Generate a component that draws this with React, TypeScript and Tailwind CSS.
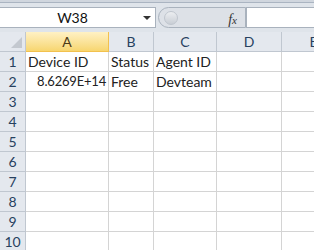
import React from 'react';

const cols = [
  { key: 'A', w: 'w-[83px]' },
  { key: 'B', w: 'w-[45px]' },
  { key: 'C', w: 'w-[63px]' },
  { key: 'D', w: 'w-[65px]' },
  { key: 'E', w: 'w-[64px]' },
];

const data: Record<number, string[]> = {
  1: ['Device ID', 'Status', 'Agent ID', '', ''],
  2: ['8.6269E+14', 'Free', 'Devteam', '', ''],
};

export default function App() {
  const rows = [1, 2, 3, 4, 5, 6, 7, 8, 9, 10];
  return (
    <div
      className="w-[314px] h-[250px] overflow-hidden bg-white text-[#222] text-[14px]"
      style={{ fontFamily: 'Lato, "Open Sans", sans-serif' }}
    >
      {/* formula bar */}
      <div className="h-[32px] bg-[#dfe4ea] border-t-[2px] border-t-[#d0d6de] relative">
        <div className="absolute top-0 left-0 right-0 h-px bg-[#aab4c1]" />
        <div className="flex h-[21px] mt-[5px]">
          <div className="w-[156px] bg-white border border-l-0 border-[#a9b2bd] flex items-center relative">
            <span className="flex-1 text-center text-[14px] pr-[10px] text-[#111]">W38</span>
            <span className="absolute right-[4px] top-[8px] w-0 h-0 border-l-[4px] border-r-[4px] border-t-[4px] border-l-transparent border-r-transparent border-t-[#333]" />
          </div>
          <div className="w-[88px] ml-[2px] bg-[#dde1e7] border border-[#a9b2bd] rounded-l-full flex items-center relative">
            <span className="ml-[5px] w-[14px] h-[14px] rounded-full bg-gradient-to-b from-[#eceef1] to-[#c9ced5] border border-[#c0c6ce]" />
            <span
              className="absolute right-[8px] top-[1px] italic text-[14px] text-[#333]"
              style={{ fontFamily: '"Liberation Serif", serif' }}
            >
              f<span className="text-[11px]">x</span>
            </span>
          </div>
          <div className="flex-1 bg-white border border-[#a9b2bd] border-r-0" />
        </div>
      </div>

      {/* column headers */}
      <div className="flex h-[20px] overflow-hidden">
        <div className="w-[26px] shrink-0 bg-[#e4e8ee] border-r border-b border-[#c0c7d0] relative">
          <span className="absolute right-[3px] bottom-[3px] w-0 h-0 border-b-[11px] border-l-[11px] border-b-[#c3c8cf] border-l-transparent" />
        </div>
        {cols.map((c) => (
          <div
            key={c.key}
            className={`${c.w} shrink-0 flex items-center justify-center border-r border-b ${
              c.key === 'A'
                ? 'bg-gradient-to-b from-[#fff1c4] to-[#f7d66f] border-[#f2c14e] text-[#4b3a16]'
                : 'bg-[#e4e8ee] border-[#c0c7d0] text-[#27415f]'
            }`}
          >
            {c.key}
          </div>
        ))}
      </div>

      {/* rows */}
      {rows.map((r) => (
        <div key={r} className="flex h-[20px] overflow-hidden">
          <div className="w-[26px] shrink-0 bg-[#e4e8ee] border-r border-b border-[#c0c7d0] flex items-center justify-center text-[#27415f]">
            {r}
          </div>
          {cols.map((c, i) => {
            const v = data[r]?.[i] ?? '';
            const right = r === 2 && i === 0;
            return (
              <div
                key={c.key}
                className={`${c.w} shrink-0 border-r border-b border-[#d4d4d4] flex items-center px-[2px] whitespace-nowrap ${
                  right ? 'justify-end text-[13px] tracking-[-0.2px]' : ''
                }`}
              >
                {v}
              </div>
            );
          })}
        </div>
      ))}
    </div>
  );
}
